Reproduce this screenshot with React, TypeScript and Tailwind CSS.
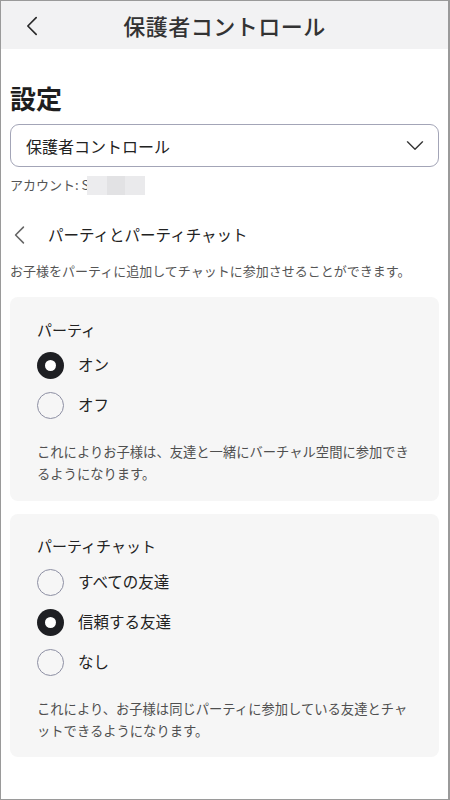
import React from "react";

const font = { fontFamily: '"Noto Sans CJK JP", "Noto Sans", sans-serif' };

function Chevron({ className }: { className?: string }) {
  return (
    <svg viewBox="0 0 14 24" className={className} fill="none" stroke="currentColor" strokeWidth="2" strokeLinecap="round" strokeLinejoin="round">
      <path d="M12 2 L2 12 L12 22" />
    </svg>
  );
}

function Radio({ checked, label }: { checked: boolean; label: string }) {
  return (
    <div className="flex items-center h-[40px]">
      {checked ? (
        <div className="w-[27px] h-[27px] rounded-full bg-[#1e1f23] flex items-center justify-center">
          <div className="w-[11px] h-[11px] rounded-full bg-white" />
        </div>
      ) : (
        <div className="w-[27px] h-[27px] rounded-full border border-[#8d8fa3] bg-[#f6f6f6]" />
      )}
      <span className="ml-[14px] text-[15.5px] text-[#222]">{label}</span>
    </div>
  );
}

export default function App() {
  return (
    <div style={font} className="w-[450px] h-[800px] bg-white border border-[#9a9a9a] border-r-2 overflow-hidden flex flex-col">
      <div className="h-[48px] bg-[#f2f2f3] flex items-center relative shrink-0">
        <Chevron className="absolute left-[25px] top-[15px] w-[12px] h-[20px] text-[#2a2a2a]" />
        <div className="w-full text-center text-[22px] font-medium text-[#333] tracking-[0.5px]">保護者コントロール</div>
      </div>
      <div className="px-[9px] flex flex-col">
        <div className="mt-[32px] text-[26px] font-bold text-[#1e1e1e] leading-[34px]">設定</div>
        <div className="mt-[9px] h-[43px] border border-[#a3a5b7] rounded-[9px] flex items-center justify-between pl-[15px] pr-[14px]">
          <span className="text-[16px] text-[#222]">保護者コントロール</span>
          <svg viewBox="0 0 20 12" className="w-[18px] h-[10px] text-[#333]" fill="none" stroke="currentColor" strokeWidth="1.6" strokeLinecap="round" strokeLinejoin="round">
            <path d="M1 1 L10 10 L19 1" />
          </svg>
        </div>
        <div className="mt-[8px] flex items-center text-[13px] text-[#555] h-[20px]">
          <span>アカウント: S</span>
          <div className="ml-[-2px] w-[58px] h-[19px] bg-[#e8e8ea] flex">
            <div className="w-[20px] bg-[#ececee]" />
            <div className="w-[18px] bg-[#e2e2e4]" />
            <div className="w-[20px] bg-[#eaeaec]" />
          </div>
        </div>
        <div className="mt-[28px] flex items-center h-[24px]">
          <Chevron className="ml-[4px] w-[11px] h-[20px] text-[#666]" />
          <span className="ml-[23px] text-[15.5px] text-[#222]">パーティとパーティチャット</span>
        </div>
        <div className="mt-[14px] text-[13px] text-[#555] leading-[20px]">お子様をパーティに追加してチャットに参加させることができます。</div>

        <div className="mt-[16px] bg-[#f6f6f6] rounded-[8px] pl-[27px] pr-[26px] pt-[22px] pb-[16px]">
          <div className="text-[15px] text-[#222] leading-[22px]">パーティ</div>
          <div className="mt-[4px]">
            <Radio checked label="オン" />
            <Radio checked={false} label="オフ" />
          </div>
          <div className="mt-[16px] text-[13.3px] text-[#4f4f4f] leading-[22px]">
            これによりお子様は、友達と一緒にバーチャル空間に参加でき<br />るようになります。
          </div>
        </div>

        <div className="mt-[13px] bg-[#f6f6f6] rounded-[8px] pl-[27px] pr-[26px] pt-[21px] pb-[15px]">
          <div className="text-[15px] text-[#222] leading-[22px]">パーティチャット</div>
          <div className="mt-[5px]">
            <Radio checked={false} label="すべての友達" />
            <Radio checked label="信頼する友達" />
            <Radio checked={false} label="なし" />
          </div>
          <div className="mt-[16px] text-[13.3px] text-[#4f4f4f] leading-[22px]">
            これにより、お子様は同じパーティに参加している友達とチャ<br />ットできるようになります。
          </div>
        </div>
      </div>
    </div>
  );
}
